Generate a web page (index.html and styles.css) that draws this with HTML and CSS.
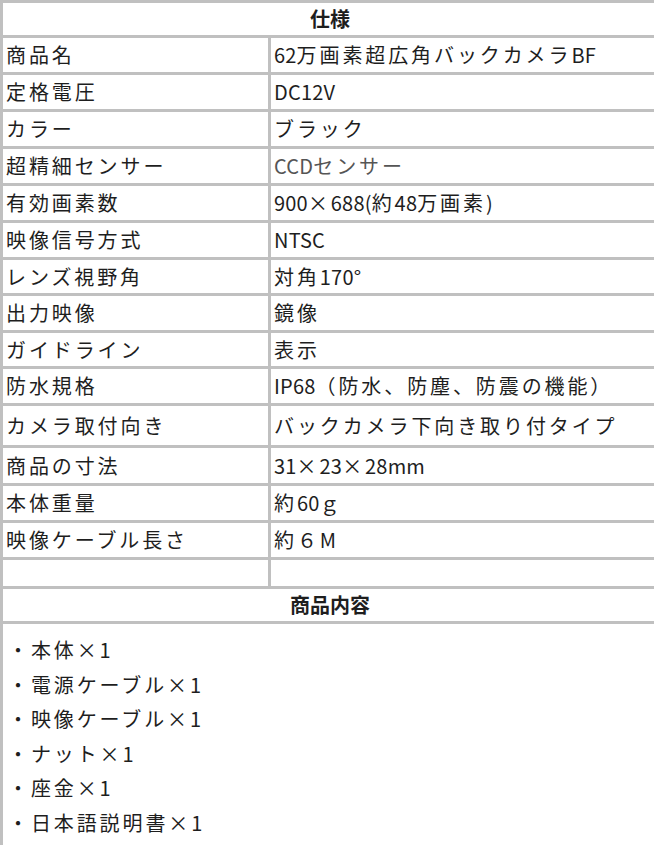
FILE: index.html
```html
<!DOCTYPE html>
<html lang="ja">
<head>
<meta charset="utf-8">
<title>仕様</title>
<link rel="stylesheet" href="styles.css">
</head>
<body>
<table class="spec">
  <colgroup><col class="c-key"><col class="c-val"></colgroup>
  <tr class="head"><th colspan="2">仕様</th></tr>
  <tr><td>商品名</td><td><span class="en">62</span>万画素超広角バックカメラ<span class="en">BF</span></td></tr>
  <tr><td>定格電圧</td><td><span class="en">DC12V</span></td></tr>
  <tr><td>カラー</td><td>ブラック</td></tr>
  <tr><td>超精細センサー</td><td class="muted"><span class="en">CCD</span>センサー</td></tr>
  <tr><td>有効画素数</td><td><span class="en">900</span>×<span class="en">688(</span>約<span class="en">48</span>万画素<span class="en">)</span></td></tr>
  <tr><td>映像信号方式</td><td><span class="en">NTSC</span></td></tr>
  <tr class="short"><td>レンズ視野角</td><td>対角<span class="en">170°</span></td></tr>
  <tr><td>出力映像</td><td>鏡像</td></tr>
  <tr class="short"><td>ガイドライン</td><td>表示</td></tr>
  <tr><td>防水規格</td><td><span class="en">IP68</span>（防水、防塵、防震の機能）</td></tr>
  <tr class="tall"><td>カメラ取付向き</td><td>バックカメラ下向き取り付タイプ</td></tr>
  <tr class="mid"><td>商品の寸法</td><td><span class="en">31</span>×<span class="en">23</span>×<span class="en">28mm</span></td></tr>
  <tr><td>本体重量</td><td>約<span class="en">60</span>ｇ</td></tr>
  <tr><td>映像ケーブル長さ</td><td>約６<span class="en">M</span></td></tr>
  <tr class="empty"><td></td><td></td></tr>
  <tr class="head"><th colspan="2">商品内容</th></tr>
  <tr class="contents"><td colspan="2">
    <ul class="items">
      <li>・本体×<span class="en">1</span></li>
      <li>・電源ケーブル×<span class="en">1</span></li>
      <li>・映像ケーブル×<span class="en">1</span></li>
      <li>・ナット×<span class="en">1</span></li>
      <li>・座金×<span class="en">1</span></li>
      <li>・日本語説明書×<span class="en">1</span></li>
    </ul>
  </td></tr>
</table>
</body>
</html>
```
FILE: styles.css
```css
html, body {
  margin: 0;
  padding: 0;
  background: #ffffff;
}
body {
  font-family: "Noto Sans CJK JP", "Noto Sans", sans-serif;
  color: #1e1e1e;
  font-size: 20px;
}
.spec {
  border-collapse: collapse;
  width: 660px;
  table-layout: fixed;
  border: 3px solid #c0c0c0;
}
.c-key { width: 268px; }
.spec td, .spec th {
  border: 3px solid #c0c0c0;
  padding: 0 3px;
  height: 34px;
  line-height: 24px;
  vertical-align: middle;
  text-align: left;
  font-weight: 400;
  letter-spacing: 2.9px;
  white-space: nowrap;
}
.en { letter-spacing: 0.2px; }
.spec th {
  text-align: center;
  font-weight: 700;
  height: 32px;
  letter-spacing: 0;
}
.spec .short td { height: 33px; }
.spec .tall td { height: 39px; }
.spec .mid td { height: 35px; }
.spec .empty td { height: 26px; }
.spec td.muted { color: #555555; }
.spec .contents td {
  vertical-align: top;
  padding: 9px 3px 10px;
  height: auto;
}
.items {
  list-style: none;
  margin: 0;
  padding: 0 0 0 2px;
}
.items li {
  line-height: 34.5px;
}
```
